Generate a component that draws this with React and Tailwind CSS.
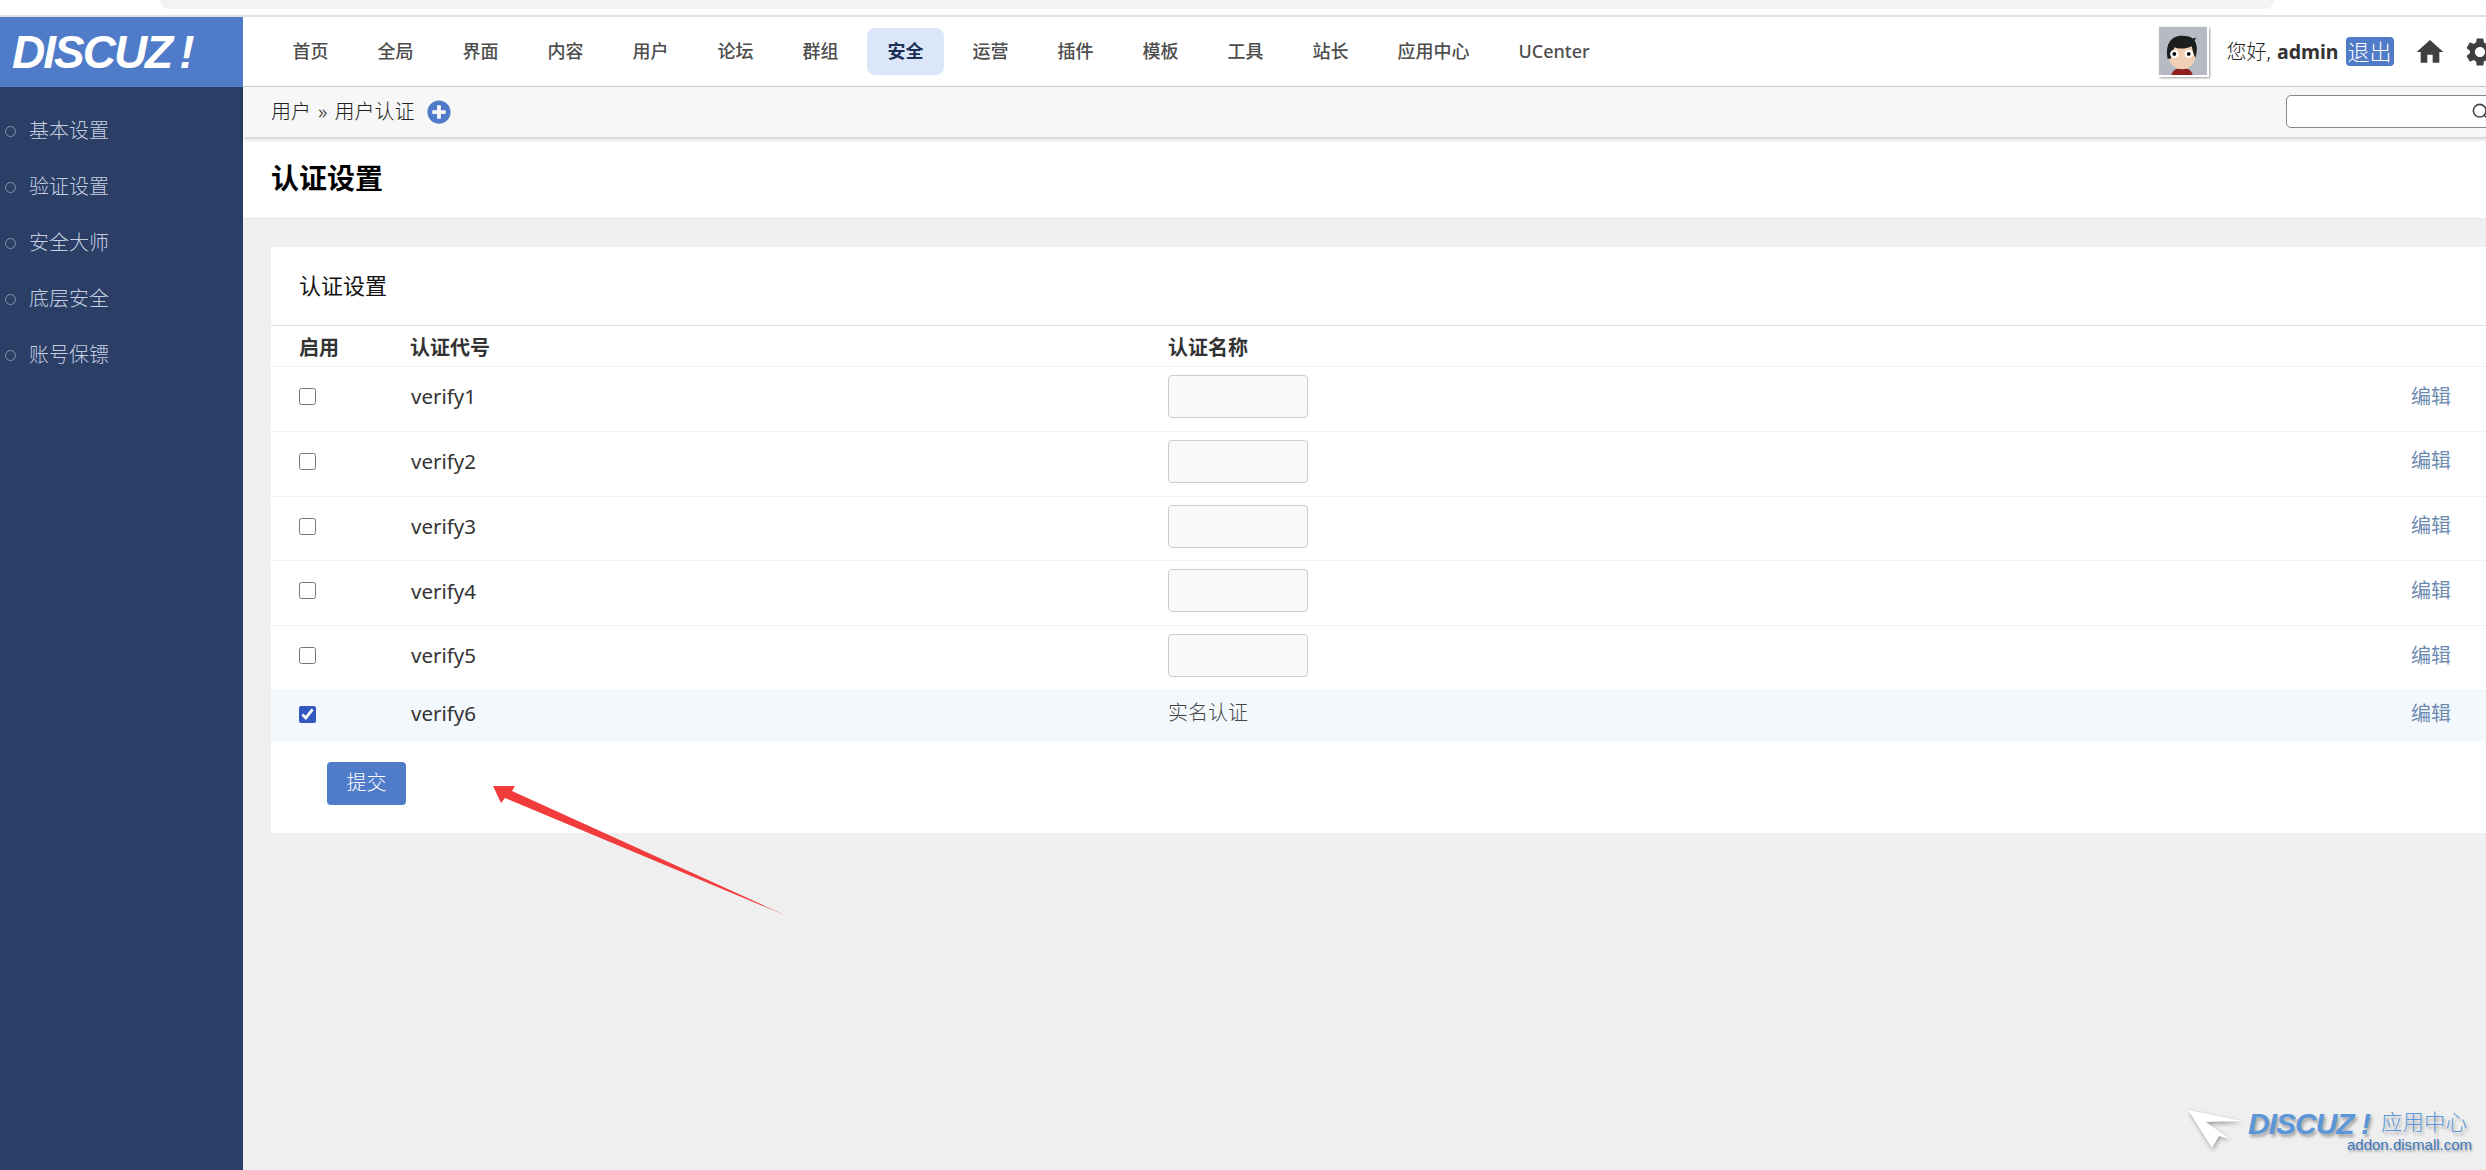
import { Search } from 'lucide-react';
import { MdHome, MdSettings } from 'react-icons/md';
import { FaPlusCircle } from 'react-icons/fa';

const navItems = ['首页', '全局', '界面', '内容', '用户', '论坛', '群组', '安全', '运营', '插件', '模板', '工具', '站长', '应用中心', 'UCenter'];
const sideItems = ['基本设置', '验证设置', '安全大师', '底层安全', '账号保镖'];
const rows = ['verify1', 'verify2', 'verify3', 'verify4', 'verify5'];
const fontStack = { fontFamily: '"Noto Sans", "Noto Sans CJK SC", sans-serif' };

function Avatar() {
  return (
    <div className="w-[50px] h-[50px] mr-[17px] bg-white shadow-[1px_1px_2px_rgba(0,0,0,0.4)] shrink-0">
      <svg viewBox="0 0 50 50" className="w-[48px] h-[48px]">
        <rect width="50" height="50" fill="#b6bac4" />
        <path d="M13 50c1-5 5-7 11-7s10 2 11 7z" fill="#8e1f1c" />
        <ellipse cx="24" cy="30" rx="14" ry="14" fill="#f0cfb4" />
        <path d="M9 33C6 16 14 9 24 9c5 0 9 1 11 3l4-1-2 3c3 4 3 11 1 18-2-3-3-8-4-12-6 3-14 3-18 1-1 3-2 8-4 12z" fill="#1d1d1d" />
        <circle cx="16" cy="28" r="4.4" fill="#fff" />
        <circle cx="31" cy="28" r="4.4" fill="#fff" />
        <circle cx="16" cy="28" r="2" fill="#000" />
        <circle cx="31" cy="28" r="2" fill="#000" />
      </svg>
    </div>
  );
}

function Row({ code }) {
  return (
    <div className="h-[64.8px] pt-2 pl-[28px] pr-[64px] border-b border-[#f1f1f1]">
      <div className="h-[43px] flex items-center">
        <div className="w-[111px] flex items-center">
          <input type="checkbox" className="w-[17px] h-[17px]" />
        </div>
        <div className="w-[758px] pl-[1px] text-[20.5px] text-[#333]">{code}</div>
        <div className="w-[140px] h-[43px] bg-[#f9f9f9] border border-[#ccc] rounded-[4px]"></div>
        <a className="ml-auto text-[20px] text-[#6d8bb0]">编辑</a>
      </div>
    </div>
  );
}

export default function App() {
  return (
    <div className="relative w-full h-[1170px] overflow-hidden bg-[#efefef] flex flex-col" style={fontStack}>
      {/* browser strip */}
      <div className="h-[17px] shrink-0 bg-white border-b-2 border-[#dfe1e5]">
        <div className="ml-[160px] w-[2114px] h-[9px] bg-[#f1f3f4] rounded-bl-[12px] rounded-br-[12px]"></div>
      </div>

      <div className="flex flex-1 min-h-0">
        {/* sidebar */}
        <aside className="w-[243px] shrink-0 bg-[#2a3e66]">
          <div className="h-[70px] bg-[#4f7bc9] pl-[12px] flex items-center">
            <span className="text-white italic text-[46px] leading-none tracking-[-2px] font-bold" style={{ fontFamily: '"Liberation Sans", sans-serif' }}>
              DISCUZ<span className="ml-[8px]">!</span>
            </span>
          </div>
          <ul className="pt-[16px]">
            {sideItems.map((item) => (
              <li key={item} className="h-[56px] flex items-center pl-[5px] text-[20px] text-[#c6cfe0] font-light">
                <span className="w-[11px] h-[11px] rounded-full border border-[#8994ab] mr-[13px]"></span>
                {item}
              </li>
            ))}
          </ul>
        </aside>

        {/* main */}
        <main className="w-[2300px] shrink-0">
          <div className="h-[70px] bg-white border-b border-[#ccc] flex items-center pl-[29px] pr-[46px]">
            <ul className="flex gap-2">
              {navItems.map((item) => (
                <li
                  key={item}
                  className={
                    item === '安全'
                      ? 'px-[20.5px] h-[47px] flex items-center rounded-[8px] bg-[#dbe7f9] text-[18px] font-bold text-[#1c2f55]'
                      : 'px-[20.5px] h-[47px] flex items-center text-[18px] font-medium text-[#4d4d4d]'
                  }
                >
                  {item}
                </li>
              ))}
            </ul>
            <div className="ml-auto flex items-center">
              <Avatar />
              <span className="text-[20px] text-[#222] font-light">您好,</span>
              <span className="ml-[6px] text-[19.5px] font-bold text-[#333]">admin</span>
              <span className="ml-[7px] w-[48px] h-[29px] flex items-center justify-center rounded-[4px] bg-[#4f7bc9] text-white text-[22px] font-light">退出</span>
              <MdHome className="ml-[20px] text-[#3f3f3f]" size={32} />
              <MdSettings className="ml-[17.5px] text-[#3f3f3f]" size={34} />
            </div>
          </div>

          <div className="h-[50px] bg-[#f7f7f7] shadow-[0_2px_4px_rgba(0,0,0,0.2)] relative flex items-center pl-[28px] pr-[42px]">
            <span className="text-[20px] text-[#222] font-light [word-spacing:2px]">用户 » 用户认证</span>
            <FaPlusCircle className="ml-[13px] text-[#4f7bc9]" size={24} />
            <div className="ml-auto w-[215px] h-[33px] mt-[-2px] border border-[#888] rounded-[5px] bg-white flex items-center justify-end pr-[10px]">
              <Search className="text-[#444]" size={19} strokeWidth={2} />
            </div>
          </div>

          <div className="h-[82px] bg-white border-b border-[#e4e4e4] flex items-center pl-[28px]">
            <h1 className="text-[28px] font-bold text-black">认证设置</h1>
          </div>

          <section className="mt-[28px] ml-[28px] mr-[28px] bg-white pb-[28px]">
            <div className="h-[79px] pb-[2px] pl-[28px] flex items-center border-b border-[#e0e0e0] text-[22px] text-[#111]">认证设置</div>
            <div className="h-[41px] pt-[3px] pl-[28px] pr-[64px] flex items-center border-b border-[#f1f1f1] text-[20px] font-bold text-[#333]">
              <div className="w-[111px]">启用</div>
              <div className="w-[758px]">认证代号</div>
              <div>认证名称</div>
            </div>
            {rows.map((code) => (
              <Row key={code} code={code} />
            ))}
            <div className="h-[50px] pb-[2px] pl-[28px] pr-[64px] bg-[#f3f8fc] flex items-center">
              <div className="w-[111px] flex items-center">
                <input type="checkbox" defaultChecked className="w-[17px] h-[17px] accent-[#3557c0]" />
              </div>
              <div className="w-[758px] pl-[1px] pb-[4px] text-[20.5px] text-[#333]">verify6</div>
              <div className="pb-[3px] text-[20px] text-[#444] font-light">实名认证</div>
              <a className="ml-auto pb-[2px] text-[20px] text-[#6d8bb0]">编辑</a>
            </div>
            <button className="mt-[21px] ml-[56px] w-[79px] h-[43px] rounded-[4px] bg-[#4f7bc9] text-white text-[20px] font-light">提交</button>
          </section>
        </main>
      </div>

      {/* annotation arrow */}
      <svg className="absolute left-[490px] top-[780px]" width="300" height="140" viewBox="490 780 300 140">
        <polygon points="493,786 515,786 512,791 787,916 505,798 501,803" fill="#f23c3c" />
      </svg>

      {/* watermark */}
      <div className="absolute left-[2188px] top-[1108px] w-[290px] h-[50px]">
        <svg className="absolute left-0 top-[2px]" width="56" height="40" viewBox="0 0 56 40" style={{ filter: 'drop-shadow(1px 2px 2px rgba(0,0,0,0.35))' }}>
          <path d="M0 0 L54 11 L18 12 L42 29 L31 26 L24 38 Z" fill="#fff" />
        </svg>
        <span
          className="absolute left-[60px] top-0 italic font-bold text-[30px] leading-[32px] tracking-[-1px] text-[#5a96d8] [text-shadow:2px_3px_3px_rgba(0,0,0,0.3)]"
          style={{ fontFamily: '"Liberation Sans", sans-serif' }}
        >
          DISCUZ !
        </span>
        <span className="absolute left-[193px] top-[-2px] text-[21.5px] leading-[32px] font-light text-[#5a96d8] [text-shadow:2px_3px_3px_rgba(0,0,0,0.3)]">应用中心</span>
        <span
          className="absolute left-[159px] top-[27px] text-[15px] leading-[20px] text-[#3f77bb] [text-shadow:1px_2px_2px_rgba(0,0,0,0.3)]"
          style={{ fontFamily: '"Liberation Sans", sans-serif' }}
        >
          addon.dismall.com
        </span>
      </div>
    </div>
  );
}
